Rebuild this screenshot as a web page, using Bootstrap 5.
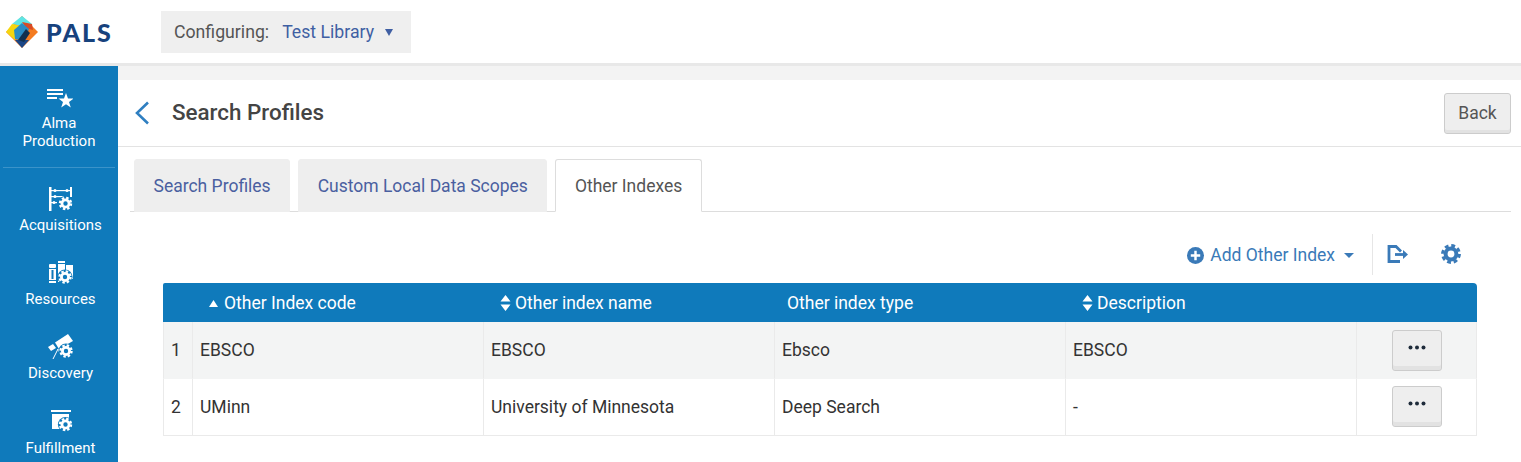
<!DOCTYPE html>
<html lang="en">
<head>
  <meta charset="UTF-8">
  <title>Search Profiles</title>
  <meta name="viewport" content="width=device-width, initial-scale=1">
  <link href="https://cdn.jsdelivr.net/npm/bootstrap@5.3.0/dist/css/bootstrap.min.css" rel="stylesheet">
  <style>
    html, body { height: 462px; overflow: hidden; }
    body { font-family: Roboto, "Liberation Sans", sans-serif; font-size: 16px; color: #333; background: #fff; }

    .top-bar { height: 67px; padding: 11px 0 0 6px; border-bottom: 3px solid #e8e8e8; border-top: 1px solid #efefef; margin-top: -1px; }
    .brand { width: 155px; height: 42px; }
    .brand-name { font-family: Lato, "Open Sans", sans-serif; font-weight: 900; font-size: 25px; letter-spacing: 2px; color: #17427d; margin-left: 8px; line-height: 1; }
    .lib-picker { width: 250px; height: 42px; background: #efefef; padding-left: 13px; color: #555; font-size: 17.7px; }
    .lib-picker b { font-weight: 400; color: #3f5fa3; margin-left: 13px; }
    .lib-caret { width: 0; height: 0; border: 4px solid transparent; border-top: 7px solid #3f5fa3; border-bottom: 0; margin-left: 11px; }

    .side-nav { width: 118px; height: 396px; padding-left: 3px; background: #0f7abb; color: #fff; font-size: 15px; line-height: 18px; overflow: hidden; }
    .side-top { height: 102px; padding-top: 22px; border-bottom: 1px solid #3b93c9; margin: 0 3px 0 0; }
    .side-item { height: 74px; padding-top: 18px; }
    .side-item svg, .side-top svg { display: block; margin: 0 auto 4px; }
    .side-top svg { margin-bottom: 6px; }
    .side-item:last-child svg { margin-bottom: 5px; }

    .work-area { min-width: 0; }
    .grey-strip { height: 14px; background: #f3f3f3; }
    .title-bar { height: 67px; padding: 0 10px 0 16px; border-bottom: 1px solid #e3e3e3; }
    .title-bar h1 { font-size: 22.4px; font-weight: 500; margin: -2px 0 0 22px; color: #444; }
    .back-btn { width: 67px; height: 41px; background: #eee; border: 1px solid #ccc; border-radius: 3px; color: #555; font-size: 17.5px; padding: 0; box-shadow: inset 0 -3px 0 #e2e2e2; }

    .tab-row { margin: 12px 10px 0 12px; padding-left: 4px; gap: 8px; border-bottom: 1px solid #ddd; height: 53px; }
    .tab-row .nav-link { height: 53px; padding: 2px 18.5px 0; background: #eee; border: 1px solid #eee; border-radius: 3px 3px 0 0; color: #4a5fa0; font-size: 17.5px; display: flex; align-items: center; }
    .tab-row .nav-link.active { background: #fff; border-color: #ddd #ddd #fff; color: #555; }

    .tool-row { height: 42px; margin-top: 21px; padding-right: 60px; color: #3a7ab8; font-size: 17.5px; }
    .add-link { color: #3a7ab8; text-decoration: none; gap: 6px; padding: 2px 18px 0 0; }
    .add-caret { width: 0; height: 0; border: 5px solid transparent; border-top: 5px solid #3a7ab8; border-bottom: 0; margin-left: 3px; }
    .tool-sep { width: 1px; height: 41px; background: #e6e6e6; margin-right: 14px; }

    .data-wrap { margin: 8px 44px 0 45px; }
    .data-grid { table-layout: fixed; width: 100%; margin: 0; color: #333; font-size: 17.5px; border-collapse: separate; border-spacing: 0; }
    .data-grid th { height: 39px; background: #0f7abb; color: #fff; font-weight: 400; padding: 2px 0 0 16px; border: 0; vertical-align: middle; white-space: nowrap; }
    .data-grid th.col-type { padding-left: 12px; }
    .data-grid th:last-child { border-top-right-radius: 4px; }
    .data-grid th:first-child { border-top-left-radius: 2px; }
    .data-grid td { height: 57px; padding: 0 8px 0 7px; vertical-align: middle; border: 0; border-right: 1px solid #eaeaea; border-bottom: 1px solid #eaeaea; }
    .data-grid td:first-child { border-left: 1px solid #eaeaea; }
    .data-grid td.row-action { padding: 0 7px 2px 8px; }
    .data-grid tr.odd-row td { background: #f3f4f4; border-bottom-color: #f3f4f4; }
    .data-grid tr.odd-row td.row-action { padding-bottom: 0; }
    .sort-mark { display: inline-block; vertical-align: -2px; margin-right: 4px; }
    .sort-mark.asc-mark { margin-right: 6px; vertical-align: 1px; }
    .dots-btn { display: block; width: 50px; height: 41px; margin: 0 auto; padding: 0 0 5px; background: #eee; border: 1px solid #ccc; border-radius: 3px; box-shadow: inset 0 -4px 0 #e2e2e2; }
    .dots-btn svg { display: block; margin: 0 auto; }
  </style>
</head>
<body>

  <svg width="0" height="0" class="position-absolute">
    <defs>
      <g id="gear">
        <circle r="7.600" fill="#0f7abb"/>
        <circle r="3.600" fill="none" stroke="#fff" stroke-width="2.800"/>
        <circle r="5.600" fill="none" stroke="#fff" stroke-width="2.200" stroke-dasharray="2.400 2"/>
      </g>
      <path id="sort-both" d="M5.500 0l5 6.500H.5zM5.500 16L.5 9.500h10z" fill="#fff"/>
    </defs>
  </svg>

  <header class="top-bar d-flex">
    <div class="brand d-flex align-items-center">
      <svg width="32" height="32" viewBox="0 0 32 32">
        <polygon points="16,0 32,16 16,32 0,16" fill="#f47b20"/>
        <polygon points="16,0 26,8 16,10 6,8" fill="#5fe5e5"/>
        <polygon points="6,8 16,10 9,24 0,16" fill="#f5d60f"/>
        <polygon points="9,24 23,24 16,32" fill="#1b4686"/>
        <polygon points="16,6 26,8 27,14 20,12" fill="#d84b26"/>
        <polygon points="8,14 16,7 23,13 18,25 9,23" fill="#2a8cc4"/>
        <polygon points="20,13 24,17 18,26 12,24" fill="#12304f"/>
      </svg>
      <span class="brand-name">PALS</span>
    </div>
    <div class="lib-picker d-flex align-items-center">
      Configuring: <b>Test Library</b><span class="lib-caret"></span>
    </div>
  </header>

  <div class="d-flex">
    <nav class="side-nav flex-shrink-0 text-center">
      <div class="side-top">
        <svg width="28" height="20" viewBox="-1 0 28 20" fill="#fff">
          <rect x="1" y="1" width="16" height="2"/><rect x="1" y="5" width="16" height="2"/><rect x="1" y="9" width="10" height="2"/>
          <polygon points="20,5 22,10.500 27.500,10.500 23,14 24.800,19.500 20,16.200 15.200,19.500 17,14 12.500,10.500 18,10.500"/>
        </svg>
        Alma<br>Production
      </div>
      <div class="side-item">
        <svg width="26" height="26" viewBox="0 0 26 26" fill="#fff">
          <rect x="1" y="1" width="2.500" height="24"/><rect x="22" y="1" width="2" height="10"/>
          <rect x="2" y="4" width="22" height="1.200"/><rect x="2" y="10" width="14" height="1.200"/><rect x="2" y="16" width="7" height="1.200"/>
          <circle cx="7" cy="4.500" r="1.500"/><circle cx="19" cy="4.500" r="1.500"/><circle cx="7" cy="10.500" r="1.500"/><circle cx="6" cy="16.500" r="1.500"/>
          <use href="#gear" x="17.500" y="17.500"/>
        </svg>
        Acquisitions
      </div>
      <div class="side-item">
        <svg width="26" height="26" viewBox="0 0 26 26" fill="#fff">
          <rect x="1" y="4" width="7" height="4" rx="1"/>
          <rect x="1" y="9" width="7" height="11"/>
          <rect x="3.500" y="10" width="2" height="9" fill="#0f7abb"/>
          <rect x="1" y="21" width="7" height="2"/>
          <rect x="10" y="1" width="7" height="2"/><rect x="10" y="4" width="7" height="18"/>
          <rect x="18" y="5" width="7" height="14"/>
          <use href="#gear" x="17" y="17"/>
        </svg>
        Resources
      </div>
      <div class="side-item">
        <svg width="26" height="26" viewBox="0 0 26 26" fill="#fff">
          <polygon points="0,13 5,10 8,14 3,17"/>
          <polygon points="7,8.500 20,0 25,7 11,15"/>
          <path d="M10 15L5 25M10 15l1 3" stroke="#fff" stroke-width="1" fill="none"/>
          <use href="#gear" x="18" y="17"/>
        </svg>
        Discovery
      </div>
      <div class="side-item">
        <svg width="26" height="26" viewBox="0 0 26 26" fill="#fff">
          <rect x="3" y="2" width="20" height="2"/><rect x="4" y="6" width="17" height="15"/>
          <use href="#gear" x="17.500" y="16.500"/>
        </svg>
        Fulfillment
      </div>
    </nav>

    <main class="work-area flex-grow-1">
      <div class="grey-strip"></div>

      <div class="title-bar d-flex align-items-center">
        <svg width="16" height="24" viewBox="0 0 16 24"><path d="M14 1.500L3 12l11 10.500" fill="none" stroke="#2f7fc1" stroke-width="2.600"/></svg>
        <h1>Search Profiles</h1>
        <button class="back-btn btn ms-auto">Back</button>
      </div>

      <ul class="nav tab-row">
        <li class="nav-item"><a class="nav-link" href="#">Search Profiles</a></li>
        <li class="nav-item"><a class="nav-link" href="#">Custom Local Data Scopes</a></li>
        <li class="nav-item"><a class="nav-link active" href="#">Other Indexes</a></li>
      </ul>

      <div class="tool-row d-flex align-items-center justify-content-end">
        <a class="add-link d-flex align-items-center" href="#">
          <svg width="17" height="17" viewBox="0 0 18 18"><circle cx="9" cy="9" r="9" fill="#3a7ab8"/><path d="M9 4v10M4 9h10" stroke="#fff" stroke-width="2.600"/></svg>
          Add Other Index
          <span class="add-caret"></span>
        </a>
        <span class="tool-sep"></span>
        <svg class="me-4" width="22" height="18" viewBox="0 0 22 18" fill="none" stroke="#3a7ab8" stroke-width="2.800">
          <path d="M13 16.500H2V1.500h7l5 5"/><path d="M8 9.500h10"/><path d="M16 5l5 4.500-5 4.500z" fill="#3a7ab8" stroke="none"/>
        </svg>
        <svg class="ms-2" width="20" height="20" viewBox="-10 -10 20 20">
          <circle r="5.400" fill="none" stroke="#3a7ab8" stroke-width="4"/>
          <circle r="8.400" fill="none" stroke="#3a7ab8" stroke-width="3" stroke-dasharray="3.800 2.800"/>
        </svg>
      </div>

      <div class="data-wrap">
        <table class="data-grid table">
          <colgroup>
            <col style="width:30px"><col style="width:291px"><col style="width:291px"><col style="width:291px"><col style="width:291px"><col>
          </colgroup>
          <thead>
            <tr>
              <th></th>
              <th><svg class="sort-mark asc-mark" width="9" height="8" viewBox="0 0 9 8"><path d="M4.500 0L9 7H0z" fill="#fff"/></svg>Other Index code</th>
              <th><svg class="sort-mark" width="11" height="16" viewBox="0 0 11 16"><use href="#sort-both"/></svg>Other index name</th>
              <th class="col-type">Other index type</th>
              <th><svg class="sort-mark" width="11" height="16" viewBox="0 0 11 16"><use href="#sort-both"/></svg>Description</th>
              <th></th>
            </tr>
          </thead>
          <tbody>
            <tr class="odd-row">
              <td>1</td><td>EBSCO</td><td>EBSCO</td><td>Ebsco</td><td>EBSCO</td>
              <td class="row-action"><button class="dots-btn" aria-label="Actions"><svg width="18" height="5" viewBox="0 0 18 5" fill="#1e2b3a"><circle cx="2.500" cy="2.500" r="2"/><circle cx="9" cy="2.500" r="2"/><circle cx="15.500" cy="2.500" r="2"/></svg></button></td>
            </tr>
            <tr>
              <td>2</td><td>UMinn</td><td>University of Minnesota</td><td>Deep Search</td><td>-</td>
              <td class="row-action"><button class="dots-btn" aria-label="Actions"><svg width="18" height="5" viewBox="0 0 18 5" fill="#1e2b3a"><circle cx="2.500" cy="2.500" r="2"/><circle cx="9" cy="2.500" r="2"/><circle cx="15.500" cy="2.500" r="2"/></svg></button></td>
            </tr>
          </tbody>
        </table>
      </div>
    </main>
  </div>

</body>
</html>
